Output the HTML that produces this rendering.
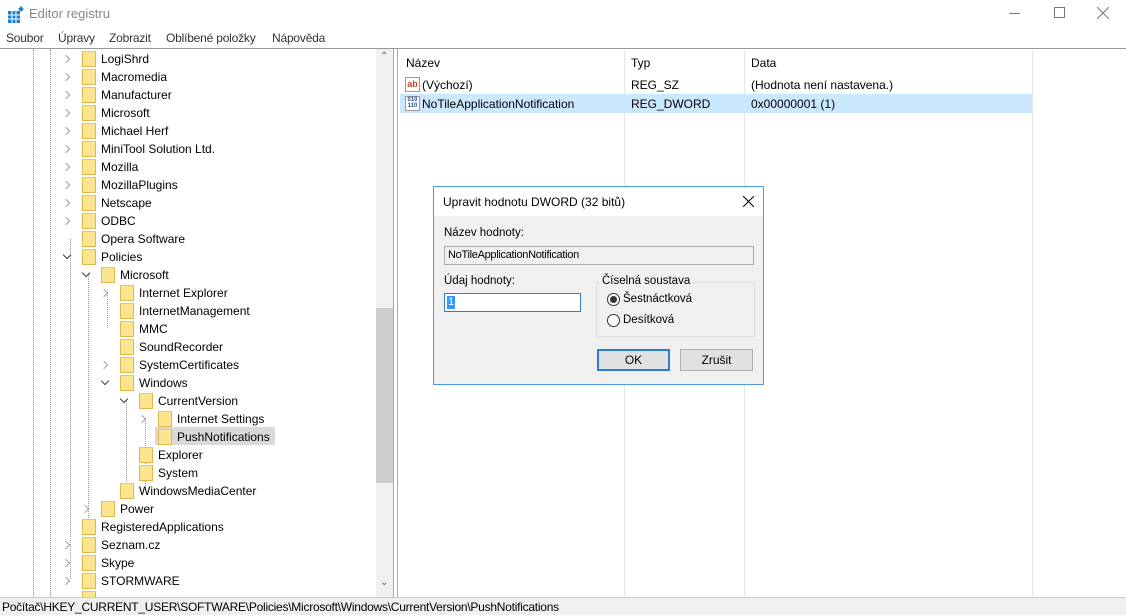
<!DOCTYPE html>
<html><head><meta charset="utf-8"><style>
*{margin:0;padding:0;box-sizing:border-box}
body{width:1126px;height:615px;overflow:hidden;background:#fff;font-family:"Liberation Sans","DejaVu Sans",sans-serif;font-size:12px;color:#000;position:relative}
.a{position:absolute;white-space:nowrap}
.r{position:absolute;height:18px;line-height:18px;white-space:nowrap}
.f{position:absolute;width:14px;height:16px;background:#fde58f;border:1px solid #e0b84a;border-top-color:#e9c865}
.c{position:absolute;width:6px;height:6px;border-top:1.5px solid #a0a0a0;border-right:1.5px solid #a0a0a0;transform:rotate(45deg);margin-left:0;margin-top:6px}
.e{position:absolute;width:6px;height:6px;border-bottom:1.5px solid #444;border-right:1.5px solid #444;transform:rotate(45deg);margin-top:4px}
.vl{position:absolute;border-left:1px dotted #999;width:0}
</style></head><body>
<svg class="a" style="left:7px;top:6px" width="18" height="18" viewBox="0 0 18 18"><rect x="1" y="5" width="12" height="12" fill="#1e7fd8"/><path d="M1 9h12M1 13h12M5 5v12M9 5v12" stroke="#fff" stroke-width="1"/><rect x="12" y="1" width="4" height="4" fill="#1e7fd8" transform="rotate(45 14 3)"/></svg>
<div class="a" style="left:29px;top:6px;font-size:13px;color:#888">Editor registru</div>
<div class="a" style="left:1009px;top:13px;width:11px;border-top:1px solid #777"></div>
<div class="a" style="left:1054px;top:7px;width:11px;height:11px;border:1px solid #777"></div>
<svg class="a" style="left:1097px;top:7px" width="12" height="12"><path d="M0 0L12 12M12 0L0 12" stroke="#777"/></svg>
<div class="a" style="left:6px;top:31px;font-size:12px;color:#333;letter-spacing:-0.2px">Soubor</div>
<div class="a" style="left:58px;top:31px;font-size:12px;color:#333;letter-spacing:-0.2px">Úpravy</div>
<div class="a" style="left:109px;top:31px;font-size:12px;color:#333;letter-spacing:-0.2px">Zobrazit</div>
<div class="a" style="left:166px;top:31px;font-size:12px;color:#333;letter-spacing:-0.2px">Oblíbené položky</div>
<div class="a" style="left:272px;top:31px;font-size:12px;color:#333;letter-spacing:-0.2px">Nápověda</div>
<div class="a" style="left:0;top:48px;width:1126px;border-top:1px solid #999"></div>
<div class="a" style="left:0;top:49px;width:394px;height:548px;overflow:hidden;border-right:1px solid #aaa">
<div class="vl" style="left:33px;top:0;height:548px"></div>
<div class="vl" style="left:50px;top:0;height:548px"></div>
<div class="vl" style="left:70px;top:190px;height:340px"></div>
<div class="vl" style="left:88px;top:225px;height:252px"></div>
<div class="vl" style="left:107px;top:243px;height:36px"></div>
<div class="vl" style="left:126px;top:351px;height:90px"></div>
<div class="vl" style="left:145px;top:369px;height:72px"></div>
<div class="a" style="left:376px;top:0;width:17px;height:548px;background:#f0f0f0"></div>
<div class="a" style="left:376px;top:259px;width:17px;height:175px;background:#cdcdcd"></div>
<div class="a" style="left:380px;top:2px;color:#555;font-size:10px">&#8963;</div>
<div class="a" style="left:380px;top:528px;color:#555;font-size:10px">&#8964;</div>
<div class="a" style="left:155px;top:378px;width:120px;height:18px;background:#d9d9d9"></div>
</div>
<div style="position:absolute;left:0;top:50px;width:376px;height:547px;overflow:hidden">
<div class="c" style="left:63px;top:0"></div><div class="f" style="left:82px;top:1px"></div><div class="r" style="left:101px;top:0">LogiShrd</div>
<div class="c" style="left:63px;top:18px"></div><div class="f" style="left:82px;top:19px"></div><div class="r" style="left:101px;top:18px">Macromedia</div>
<div class="c" style="left:63px;top:36px"></div><div class="f" style="left:82px;top:37px"></div><div class="r" style="left:101px;top:36px">Manufacturer</div>
<div class="c" style="left:63px;top:54px"></div><div class="f" style="left:82px;top:55px"></div><div class="r" style="left:101px;top:54px">Microsoft</div>
<div class="c" style="left:63px;top:72px"></div><div class="f" style="left:82px;top:73px"></div><div class="r" style="left:101px;top:72px">Michael Herf</div>
<div class="c" style="left:63px;top:90px"></div><div class="f" style="left:82px;top:91px"></div><div class="r" style="left:101px;top:90px">MiniTool Solution Ltd.</div>
<div class="c" style="left:63px;top:108px"></div><div class="f" style="left:82px;top:109px"></div><div class="r" style="left:101px;top:108px">Mozilla</div>
<div class="c" style="left:63px;top:126px"></div><div class="f" style="left:82px;top:127px"></div><div class="r" style="left:101px;top:126px">MozillaPlugins</div>
<div class="c" style="left:63px;top:144px"></div><div class="f" style="left:82px;top:145px"></div><div class="r" style="left:101px;top:144px">Netscape</div>
<div class="c" style="left:63px;top:162px"></div><div class="f" style="left:82px;top:163px"></div><div class="r" style="left:101px;top:162px">ODBC</div>
<div class="f" style="left:82px;top:181px"></div><div class="r" style="left:101px;top:180px">Opera Software</div>
<div class="e" style="left:64px;top:198px"></div><div class="f" style="left:82px;top:199px"></div><div class="r" style="left:101px;top:198px">Policies</div>
<div class="e" style="left:83px;top:216px"></div><div class="f" style="left:101px;top:217px"></div><div class="r" style="left:120px;top:216px">Microsoft</div>
<div class="c" style="left:101px;top:234px"></div><div class="f" style="left:120px;top:235px"></div><div class="r" style="left:139px;top:234px">Internet Explorer</div>
<div class="f" style="left:120px;top:253px"></div><div class="r" style="left:139px;top:252px">InternetManagement</div>
<div class="f" style="left:120px;top:271px"></div><div class="r" style="left:139px;top:270px">MMC</div>
<div class="f" style="left:120px;top:289px"></div><div class="r" style="left:139px;top:288px">SoundRecorder</div>
<div class="c" style="left:101px;top:306px"></div><div class="f" style="left:120px;top:307px"></div><div class="r" style="left:139px;top:306px">SystemCertificates</div>
<div class="e" style="left:102px;top:324px"></div><div class="f" style="left:120px;top:325px"></div><div class="r" style="left:139px;top:324px">Windows</div>
<div class="e" style="left:121px;top:342px"></div><div class="f" style="left:139px;top:343px"></div><div class="r" style="left:158px;top:342px">CurrentVersion</div>
<div class="c" style="left:139px;top:360px"></div><div class="f" style="left:158px;top:361px"></div><div class="r" style="left:177px;top:360px">Internet Settings</div>
<div class="f" style="left:158px;top:379px"></div><div class="r" style="left:177px;top:378px">PushNotifications</div>
<div class="f" style="left:139px;top:397px"></div><div class="r" style="left:158px;top:396px">Explorer</div>
<div class="f" style="left:139px;top:415px"></div><div class="r" style="left:158px;top:414px">System</div>
<div class="f" style="left:120px;top:433px"></div><div class="r" style="left:139px;top:432px">WindowsMediaCenter</div>
<div class="c" style="left:82px;top:450px"></div><div class="f" style="left:101px;top:451px"></div><div class="r" style="left:120px;top:450px">Power</div>
<div class="f" style="left:82px;top:469px"></div><div class="r" style="left:101px;top:468px">RegisteredApplications</div>
<div class="c" style="left:63px;top:486px"></div><div class="f" style="left:82px;top:487px"></div><div class="r" style="left:101px;top:486px">Seznam.cz</div>
<div class="c" style="left:63px;top:504px"></div><div class="f" style="left:82px;top:505px"></div><div class="r" style="left:101px;top:504px">Skype</div>
<div class="c" style="left:63px;top:522px"></div><div class="f" style="left:82px;top:523px"></div><div class="r" style="left:101px;top:522px">STORMWARE</div>
<div class="f" style="left:82px;top:541px"></div>
</div>
<div class="a" style="left:397px;top:49px;width:729px;height:548px;border-left:1px solid #aaa"></div>
<div class="a" style="left:624px;top:50px;height:546px;border-left:1px solid #e5e5e5"></div>
<div class="a" style="left:744px;top:50px;height:546px;border-left:1px solid #e5e5e5"></div>
<div class="a" style="left:1032px;top:50px;height:546px;border-left:1px solid #e5e5e5"></div>
<div class="a" style="left:406px;top:56px">Název</div>
<div class="a" style="left:631px;top:56px">Typ</div>
<div class="a" style="left:751px;top:56px">Data</div>
<div class="a" style="left:400px;top:94px;width:632px;height:19px;background:#cce8ff"></div>
<div class="a" style="left:405px;top:77px;width:15px;height:15px;border:1px solid #999;background:#fff;color:#c8431b;font-size:9px;font-weight:bold;line-height:12px;text-align:center">ab</div>
<div class="a" style="left:405px;top:96px;width:15px;height:15px;border:1px solid #999;background:#fff;color:#1f4e9a;font-size:6px;font-weight:bold;line-height:6px;text-align:center">010<br>110</div>
<div class="a" style="left:422px;top:78px">(Výchozí)</div>
<div class="a" style="left:631px;top:78px">REG_SZ</div>
<div class="a" style="left:751px;top:78px">(Hodnota není nastavena.)</div>
<div class="a" style="left:422px;top:97px">NoTileApplicationNotification</div>
<div class="a" style="left:631px;top:97px">REG_DWORD</div>
<div class="a" style="left:751px;top:97px">0x00000001 (1)</div>
<div class="a" style="left:0;top:597px;width:1126px;height:18px;background:#f0f0f0;border-top:1px solid #ccc;line-height:18px;padding-left:2px;letter-spacing:-0.25px">Počítač\HKEY_CURRENT_USER\SOFTWARE\Policies\Microsoft\Windows\CurrentVersion\PushNotifications</div>
<div class="a" style="left:433px;top:186px;width:331px;height:199px;border:1px solid #4a9be0;background:#f0f0f0">
<div class="a" style="left:0;top:0;width:329px;height:29px;background:#fff"></div>
<div class="a" style="left:9px;top:8px;font-size:12px">Upravit hodnotu DWORD (32 bitů)</div>
<svg class="a" style="left:309px;top:9px" width="11" height="11"><path d="M0 0L11 11M11 0L0 11" stroke="#000"/></svg>
<div class="a" style="left:10px;top:40px;font-size:11.5px">Název hodnoty:</div>
<div class="a" style="left:10px;top:59px;width:310px;height:19px;border:1px solid #aaa;background:#f0f0f0;font-size:11px;line-height:17px;padding-left:3px;letter-spacing:-0.3px">NoTileApplicationNotification</div>
<div class="a" style="left:10px;top:88px;font-size:11.5px">Údaj hodnoty:</div>
<div class="a" style="left:10px;top:106px;width:137px;height:19px;border:1px solid #2f7cd0;background:#fff"><span style="position:absolute;left:2px;top:2px;background:#3399ff;color:#fff;font-size:11px;line-height:13px;padding:0 1px">1</span></div>
<div class="a" style="left:162px;top:95px;width:159px;height:55px;border:1px solid #ddd"></div>
<div class="a" style="left:166px;top:88px;font-size:11.5px;background:#f0f0f0;padding:0 2px">Číselná soustava</div>
<div class="a" style="left:173px;top:106px;width:13px;height:13px;border:1px solid #333;border-radius:50%;background:#fff"><div style="position:absolute;left:2px;top:2px;width:7px;height:7px;border-radius:50%;background:#333"></div></div>
<div class="a" style="left:189px;top:106px;font-size:11.5px">Šestnáctková</div>
<div class="a" style="left:173px;top:127px;width:13px;height:13px;border:1px solid #333;border-radius:50%;background:#fff"></div>
<div class="a" style="left:189px;top:127px;font-size:11.5px">Desítková</div>
<div class="a" style="left:163px;top:162px;width:73px;height:22px;border:2px solid #2f7cd0;background:#e1e1e1;text-align:center;line-height:18px;font-size:12px">OK</div>
<div class="a" style="left:246px;top:162px;width:73px;height:22px;border:1px solid #adadad;background:#e1e1e1;text-align:center;line-height:20px;font-size:12px">Zrušit</div>
</div>
</body></html>
